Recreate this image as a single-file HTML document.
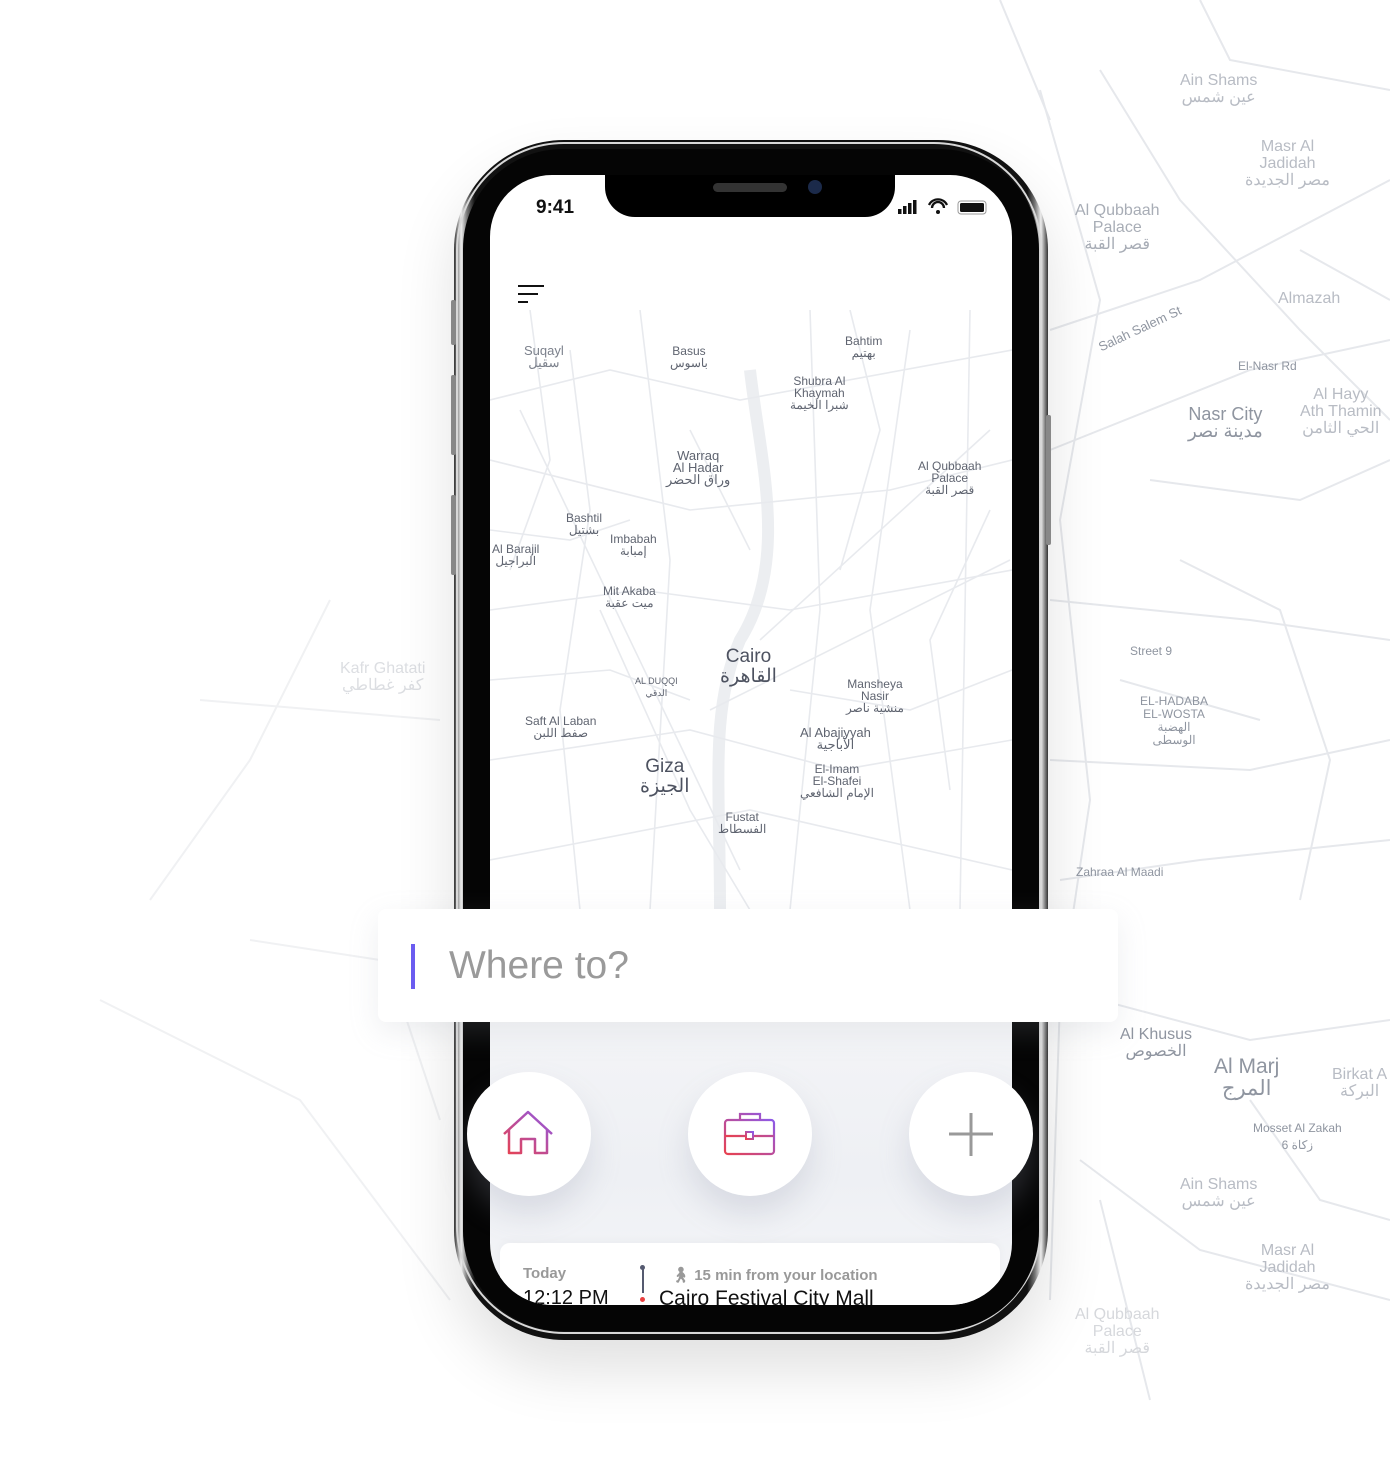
<!DOCTYPE html>
<html><head><meta charset="utf-8"><style>
body{margin:0;width:1390px;height:1480px;overflow:hidden;background:#fff;font-family:"Liberation Sans",sans-serif;position:relative}
.abs{position:absolute}
.lbl{position:absolute;color:#b8bcc4;font-size:16px;line-height:17px;text-align:center}
.ml{position:absolute;color:#5f6470;font-size:12px;line-height:12px;text-align:center}
.circ{position:absolute;width:124px;height:124px;border-radius:50%;background:#fff;box-shadow:0 18px 30px rgba(150,155,175,.25)}
</style></head><body>
<svg class="abs" style="left:0;top:0" width="1390" height="1480">
<g stroke="#e6e8ec" stroke-width="2" fill="none">
<path d="M1040 90 L1100 300 L1060 520 L1090 800 L1060 1000 L1050 1300"/>
<path d="M1100 70 L1180 200 L1300 330 L1390 420"/>
<path d="M1050 330 L1200 280 L1390 180"/>
<path d="M1050 450 L1250 370 L1390 340"/>
<path d="M1050 600 L1250 620 L1390 640"/>
<path d="M1050 760 L1250 770 L1390 740"/>
<path d="M1180 560 L1280 610 L1330 760 L1300 900"/>
<path d="M1060 880 L1200 860 L1390 840"/>
<path d="M1100 1000 L1250 1040 L1390 1020"/>
<path d="M1080 1160 L1200 1250 L1390 1300"/>
<path d="M1100 1200 L1150 1400"/>
<path d="M1250 1100 L1320 1200 L1390 1220"/>
<path d="M1150 480 L1300 500 L1390 460"/>
<path d="M1120 680 L1260 720"/>
<path d="M1000 0 L1050 120"/>
<path d="M1200 0 L1230 60 L1390 90"/>
<path d="M1300 250 L1390 300"/>
</g>
<g stroke="#f0f1f3" stroke-width="2" fill="none">
<path d="M330 600 L250 760 L150 900"/>
<path d="M250 940 L380 960"/>
<path d="M400 1000 L440 1120"/>
<path d="M200 700 L440 720"/>
<path d="M100 1000 L300 1100 L450 1300"/>
</g>
</svg>
<div class="lbl" style="left:1180px;top:72px">Ain Shams<br>عين شمس</div>
<div class="lbl" style="left:1245px;top:138px">Masr Al<br>Jadidah<br>مصر الجديدة</div>
<div class="lbl" style="left:1075px;top:202px;color:#a8adb6">Al Qubbaah<br>Palace<br>قصر القبة</div>
<div class="lbl" style="left:1278px;top:290px">Almazah</div>
<div class="lbl" style="left:1188px;top:406px;color:#8f95a0;font-size:18px">Nasr City<br>مدينة نصر</div>
<div class="lbl" style="left:1300px;top:386px">Al Hayy<br>Ath Thamin<br>الحي الثامن</div>
<div class="lbl" style="left:1140px;top:695px;font-size:12px;color:#8f95a0;line-height:13px">EL-HADABA<br>EL-WOSTA<br>الهضبة<br>الوسطى</div>
<div class="lbl" style="left:1130px;top:643px;font-size:12px;color:#8f95a0">Street 9</div>
<div class="lbl" style="left:1076px;top:864px;font-size:12px;color:#8f95a0">Zahraa Al Maadi</div>
<div class="lbl" style="left:1120px;top:1026px;color:#8f95a0">Al Khusus<br>الخصوص</div>
<div class="lbl" style="left:1214px;top:1056px;color:#8f95a0;font-size:21px;line-height:22px">Al Marj<br>المرج</div>
<div class="lbl" style="left:1332px;top:1066px">Birkat A<br>البركة</div>
<div class="lbl" style="left:1253px;top:1120px;font-size:12px;color:#8f95a0">Mosset Al Zakah<br>زكاة 6</div>
<div class="lbl" style="left:1180px;top:1176px">Ain Shams<br>عين شمس</div>
<div class="lbl" style="left:1245px;top:1242px">Masr Al<br>Jadidah<br>مصر الجديدة</div>
<div class="lbl" style="left:1075px;top:1306px;color:#d6d8dc">Al Qubbaah<br>Palace<br>قصر القبة</div>
<div class="lbl" style="left:340px;top:660px;color:#dcdee2">Kafr Ghatati<br>كفر غطاطي</div>
<div class="lbl" style="left:1095px;top:320px;font-size:13px;color:#8f95a0;transform:rotate(-25deg)">Salah Salem St</div>
<div class="lbl" style="left:1238px;top:358px;font-size:12px;color:#8f95a0">El-Nasr Rd</div>
<!-- phone body -->
<div class="abs" style="left:454px;top:140px;width:594px;height:1200px;border-radius:110px;background:linear-gradient(90deg,#333,#eee 1.2%,#777 2.2%,#111 3.5%,#111 96.5%,#777 97.8%,#eee 98.8%,#333);box-shadow:0 30px 60px rgba(0,0,0,.12)"></div>
<div class="abs" style="left:456px;top:142px;width:586px;height:1192px;border-radius:108px;border:2px solid #d8d8d8;box-sizing:border-box"></div>
<div class="abs" style="left:463px;top:149px;width:576px;height:1182px;border-radius:100px;background:#050505"></div>
<div class="abs" style="left:451px;top:300px;width:5px;height:45px;background:#888;border-radius:2px"></div>
<div class="abs" style="left:451px;top:375px;width:5px;height:80px;background:#888;border-radius:2px"></div>
<div class="abs" style="left:451px;top:495px;width:5px;height:80px;background:#888;border-radius:2px"></div>
<div class="abs" style="left:1046px;top:415px;width:5px;height:130px;background:#888;border-radius:2px"></div>
<!-- screen -->
<div class="abs" style="left:490px;top:175px;width:522px;height:1130px;border-radius:62px;overflow:hidden;background:linear-gradient(#fff 0,#fff 780px,#f2f3f6 880px,#eef0f4 1000px,#f4f5f8 1130px)">
 <svg class="abs" style="left:0;top:135px" width="522" height="600">
 <g stroke="#e8eaee" stroke-width="1.6" fill="none">
 <path d="M260 60 C270 150 300 250 250 330 C220 400 230 470 230 600" stroke="#eceef1" stroke-width="12"/>
 <path d="M0 150 L200 200 L400 180 L522 150"/><path d="M0 300 L150 280 L300 300 L522 260"/>
 <path d="M80 40 L100 200 L70 400 L90 600"/><path d="M150 0 L180 250 L160 600"/>
 <path d="M320 0 L330 300 L300 600"/><path d="M420 20 L380 300 L420 600"/>
 <path d="M0 450 L200 420 L350 460 L522 430"/><path d="M220 400 L520 250"/><path d="M0 550 L260 500 L522 560"/>
 <path d="M480 0 L470 600"/><path d="M30 100 L250 560"/><path d="M270 330 L500 120"/>
 <path d="M0 90 L120 60 L250 90 L522 40"/><path d="M40 0 L60 150 L20 260"/><path d="M360 0 L390 120 L350 260"/>
 <path d="M0 370 L120 360 L200 390"/><path d="M300 380 L420 400 L522 360"/><path d="M110 300 L200 500 L260 600"/>
 <path d="M500 200 L440 330 L460 480"/><path d="M0 220 L80 230 L140 210"/><path d="M200 120 L260 240"/>
 </g></svg>
 <div class="abs" style="left:46px;top:22px;font-size:19px;font-weight:bold;color:#111">9:41</div>
 <div class="abs" style="left:115px;top:0;width:290px;height:42px;background:#000;border-radius:0 0 30px 30px"></div>
 <div class="abs" style="left:223px;top:8px;width:74px;height:9px;border-radius:5px;background:#333"></div>
 <div class="abs" style="left:318px;top:5px;width:14px;height:14px;border-radius:50%;background:#1b2a4a"></div>
 <svg class="abs" style="left:406px;top:22px" width="96" height="20">
 <rect x="2" y="12" width="3.5" height="5" fill="#111"/><rect x="7" y="9" width="3.5" height="8" fill="#111"/><rect x="12" y="6" width="3.5" height="11" fill="#111"/><rect x="17" y="3" width="3.5" height="14" fill="#111"/>
 <path d="M33 8 A10 10 0 0 1 51 8 M36 11 A6 6 0 0 1 48 11" stroke="#111" stroke-width="2.3" fill="none"/><circle cx="42" cy="15" r="2" fill="#111"/>
 <rect x="62" y="4" width="28" height="13" rx="3" fill="none" stroke="#999" stroke-width="1"/><rect x="64" y="6" width="24" height="9" rx="1.5" fill="#111"/>
 </svg>
 <div class="abs" style="left:28px;top:110px;width:26px;height:2px;background:#111"></div>
 <div class="abs" style="left:28px;top:118px;width:20px;height:2px;background:#111"></div>
 <div class="abs" style="left:28px;top:126px;width:10px;height:2px;background:#111"></div>
 <div class="ml" style="left:34px;top:170px;font-size:13px;color:#7c818c">Suqayl<br>سقيل</div>
 <div class="ml" style="left:180px;top:170px">Basus<br>باسوس</div>
 <div class="ml" style="left:355px;top:160px">Bahtim<br>بهتيم</div>
 <div class="ml" style="left:300px;top:200px">Shubra Al<br>Khaymah<br>شبرا الخيمة</div>
 <div class="ml" style="left:176px;top:275px;font-size:13px">Warraq<br>Al Hadar<br>وراق الحضر</div>
 <div class="ml" style="left:428px;top:285px">Al Qubbaah<br>Palace<br>قصر القبة</div>
 <div class="ml" style="left:76px;top:337px">Bashtil<br>بشتيل</div>
 <div class="ml" style="left:120px;top:358px">Imbabah<br>إمبابة</div>
 <div class="ml" style="left:2px;top:368px">Al Barajil<br>البراجيل</div>
 <div class="ml" style="left:113px;top:410px">Mit Akaba<br>ميت عقبة</div>
 <div class="ml" style="left:230px;top:472px;font-size:19px;line-height:20px;color:#4d5260">Cairo<br>القاهرة</div>
 <div class="ml" style="left:356px;top:503px">Mansheya<br>Nasir<br>منشية ناصر</div>
 <div class="ml" style="left:35px;top:540px">Saft Al Laban<br>صفط اللبن</div>
 <div class="ml" style="left:310px;top:552px;font-size:13px">Al Abajiyyah<br>الأباجية</div>
 <div class="ml" style="left:150px;top:582px;font-size:19px;line-height:20px;color:#4d5260">Giza<br>الجيزة</div>
 <div class="ml" style="left:310px;top:588px">El-Imam<br>El-Shafei<br>الإمام الشافعي</div>
 <div class="ml" style="left:228px;top:636px">Fustat<br>الفسطاط</div>
 <div class="ml" style="left:145px;top:500px;font-size:9px">AL DUQQI<br>الدقي</div>
 <div class="abs" style="left:10px;top:1068px;width:500px;height:70px;border-radius:10px 10px 0 0;background:#fff;box-shadow:0 -2px 10px rgba(0,0,0,.03)">
  <div class="abs" style="left:23px;top:22px;font-size:15px;font-weight:bold;color:#999">Today</div>
  <div class="abs" style="left:23px;top:44px;font-size:20px;color:#111">12:12 PM</div>
  <div class="abs" style="left:142px;top:26px;width:2px;height:24px;background:#555a70"></div>
  <div class="abs" style="left:140px;top:22px;width:5px;height:5px;border-radius:50%;background:#555a70"></div>
  <div class="abs" style="left:140px;top:54px;width:5px;height:5px;border-radius:50%;background:#e94040"></div>
  <div class="abs" style="left:171px;top:23px;font-size:15px;font-weight:bold;color:#999">🚶&#xFE0E; 15 min from your location</div>
  <div class="abs" style="left:159px;top:44px;font-size:21px;color:#111">Cairo Festival City Mall</div>
 </div>
</div>
<div class="abs" style="left:378px;top:909px;width:740px;height:113px;background:#fff;border-radius:8px;box-shadow:0 10px 30px rgba(160,165,180,.18)">
 <div class="abs" style="left:33px;top:35px;width:4px;height:45px;background:#6b5cf0"></div>
 <div class="abs" style="left:71px;top:35px;font-size:39px;color:#9a9a9a">Where to?</div>
</div>
<div class="circ" style="left:467px;top:1072px"></div>
<div class="circ" style="left:688px;top:1072px"></div>
<div class="circ" style="left:909px;top:1072px"></div>
<svg class="abs" style="left:0;top:0" width="1390" height="1480">
<defs><linearGradient id="g" x1="0" y1="1" x2="1" y2="0"><stop offset="0" stop-color="#e8414f"/><stop offset="1" stop-color="#8d5ae8"/></linearGradient></defs>
<path d="M504 1134 L528 1112 L552 1134 M509 1130 V1153 H521 V1139 H535 V1153 H547 V1130" stroke="url(#g)" stroke-width="2.5" fill="none" stroke-linejoin="round"/>
<rect x="725" y="1120" width="49" height="34" rx="3" stroke="url(#g)" stroke-width="2.2" fill="none"/>
<path d="M740 1120 V1114 H760 V1120 M725 1136 H774" stroke="url(#g)" stroke-width="2.2" fill="none"/>
<rect x="746" y="1132" width="7" height="7" fill="#fff" stroke="url(#g)" stroke-width="2"/>
<path d="M971 1113 V1156 M949 1134 H993" stroke="#999" stroke-width="3"/>
</svg>
</body></html>
